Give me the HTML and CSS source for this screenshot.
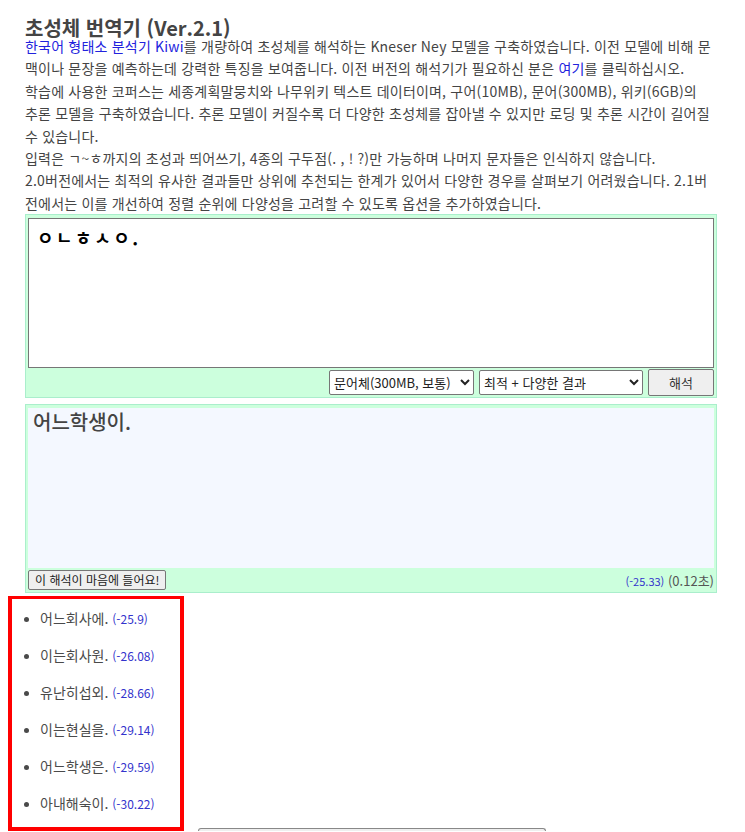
FILE: index.html
```html
<!DOCTYPE html>
<html lang="ko">
<head>
    <meta charset="UTF-8">
    <meta name="viewport" content="width=device-width, initial-scale=1.0">
    <title>초성체 번역기</title>
    <link rel="stylesheet" href="styles.css">
</head>
<body>

    <div class="wrap">
        <h1>초성체 번역기 (Ver.2.1)</h1>
        <p class="intro">
            <a href="#">한국어 형태소 분석기 Kiwi</a>를 개량하여 초성체를 해석하는 Kneser Ney 모델을 구축하였습니다. 이전 모델에 비해 문<br>맥이나 문장을 예측하는데 강력한 특징을 보여줍니다. 이전 버전의 해석기가 필요하신 분은 <a href="#">여기</a>를 클릭하십시오.<br>
            학습에 사용한 코퍼스는 세종계획말뭉치와 나무위키 텍스트 데이터이며, 구어(10MB), 문어(300MB), 위키(6GB)의<br>추론 모델을 구축하였습니다. 추론 모델이 커질수록 더 다양한 초성체를 잡아낼 수 있지만 로딩 및 추론 시간이 길어질<br>수 있습니다.<br>
            입력은 ㄱ~ㅎ까지의 초성과 띄어쓰기, 4종의 구두점(. , ! ?)만 가능하며 나머지 문자들은 인식하지 않습니다.<br>
            2.0버전에서는 최적의 유사한 결과들만 상위에 추천되는 한계가 있어서 다양한 경우를 살펴보기 어려웠습니다. 2.1버<br>전에서는 이를 개선하여 정렬 순위에 다양성을 고려할 수 있도록 옵션을 추가하였습니다.
        </p>

        <!-- 입력 -->
        <div class="box">
            <textarea class="input" spellcheck="false">ㅇㄴㅎㅅㅇ.</textarea>
            <div class="controls">
                <select class="sel sel-model">
                    <option>문어체(300MB, 보통)</option>
                    <option>구어체(10MB, 빠름)</option>
                    <option>위키(6GB, 느림)</option>
                </select>
                <select class="sel sel-mode">
                    <option>최적 + 다양한 결과</option>
                    <option>최적 결과</option>
                </select>
                <button class="run">해석</button>
            </div>
        </div>

        <!-- 결과 -->
        <div class="box result">
            <div class="output">어느학생이.</div>
            <div class="result-bar">
                <button class="like">이 해석이 마음에 들어요!</button>
                <span class="meta"><span class="score">(-25.33)</span> (0.12초)</span>
            </div>
        </div>
    </div>

    <!-- 다른 후보 -->
    <div class="bottom">
        <ul class="candidates">
            <li>어느회사에. <span class="score">(-25.9)</span></li>
            <li>이는회사원. <span class="score">(-26.08)</span></li>
            <li>유난히섭외. <span class="score">(-28.66)</span></li>
            <li>이는현실을. <span class="score">(-29.14)</span></li>
            <li>어느학생은. <span class="score">(-29.59)</span></li>
            <li>아내해숙이. <span class="score">(-30.22)</span></li>
        </ul>
        <div class="more"></div>
    </div>

</body>
</html>
```

FILE: styles.css
```css
body {
    margin: 0 8px;
    font-family: "Noto Sans CJK KR", "Noto Sans", sans-serif;
    font-size: 14px;
    color: #444;
    background-color: #fff;
}
.wrap {
    margin: 0 17px;
    width: 692px;
}
h1 {
    font-size: 20px;
    font-weight: bold;
    line-height: 14px;
    margin: 21px 0 0;
}
.intro {
    margin: 0;
    line-height: 22.4px;
    letter-spacing: 0.2px;
}
.intro a {
    color: #2222dd;
    text-decoration: none;
}
.box {
    background-color: #ccffdd;
    border: 1px solid #aaeecc;
    padding: 3px 2px 1px;
}
.input {
    display: block;
    box-sizing: border-box;
    width: 100%;
    height: 150px;
    margin: 0;
    padding: 5px 8px;
    border: 1px solid #767676;
    resize: none;
    font-family: "Noto Sans CJK KR", sans-serif;
    font-size: 18px;
    font-weight: bold;
    letter-spacing: 2.5px;
    color: #000;
}
.controls {
    display: flex;
    justify-content: flex-end;
    gap: 5px;
    margin-top: 1px;
}
.sel {
    height: 25px;
    margin-top: 1px;
    font-family: "Noto Sans CJK KR", sans-serif;
    font-size: 13px;
    color: #222;
    border: 1px solid #767676;
    border-radius: 2px;
    background-color: #fff;
}
.sel-model {
    width: 145px;
}
.sel-mode {
    width: 164px;
}
.run {
    width: 66px;
    height: 27px;
    font-family: "Noto Sans CJK KR", sans-serif;
    font-size: 13px;
    color: #333;
    background-color: #efefef;
    border: 1px solid #767676;
    border-radius: 2px;
}
.result {
    margin-top: 6px;
    padding-bottom: 2px;
}
.output {
    height: 160px;
    box-sizing: border-box;
    padding: 0 5px;
    background-color: #f4f8ff;
    font-size: 20px;
    font-weight: 500;
    line-height: 28px;
}
.result-bar {
    display: flex;
    justify-content: space-between;
    align-items: center;
    margin-top: 2px;
}
.like {
    height: 20px;
    padding: 0 6px;
    font-family: "Noto Sans CJK KR", sans-serif;
    font-size: 12px;
    line-height: 16px;
    color: #222;
    background-color: #efefef;
    border: 1px solid #767676;
    border-radius: 2px;
}
.meta {
    font-size: 13px;
    color: #555;
}
.score {
    color: #3333cc;
    font-size: 11px;
}
.bottom {
    display: flex;
    align-items: flex-end;
    margin-top: 3px;
}
.candidates {
    margin: 0;
    padding: 5px 0 0 28px;
    box-sizing: border-box;
    width: 176px;
    height: 235px;
    border: 4px solid #ff0000;
    border-top-width: 3px;
    color: #4a4a4a;
}
.candidates li {
    height: 37px;
    line-height: 28px;
    font-size: 14px;
}
.candidates li::marker {
    font-size: 12px;
}
.candidates .score {
    font-size: 12px;
}
.more {
    width: 346px;
    height: 2px;
    margin-left: 14px;
    border: 1px solid #888;
    border-bottom: none;
    border-radius: 3px 3px 0 0;
    background-color: #efefef;
}
```
